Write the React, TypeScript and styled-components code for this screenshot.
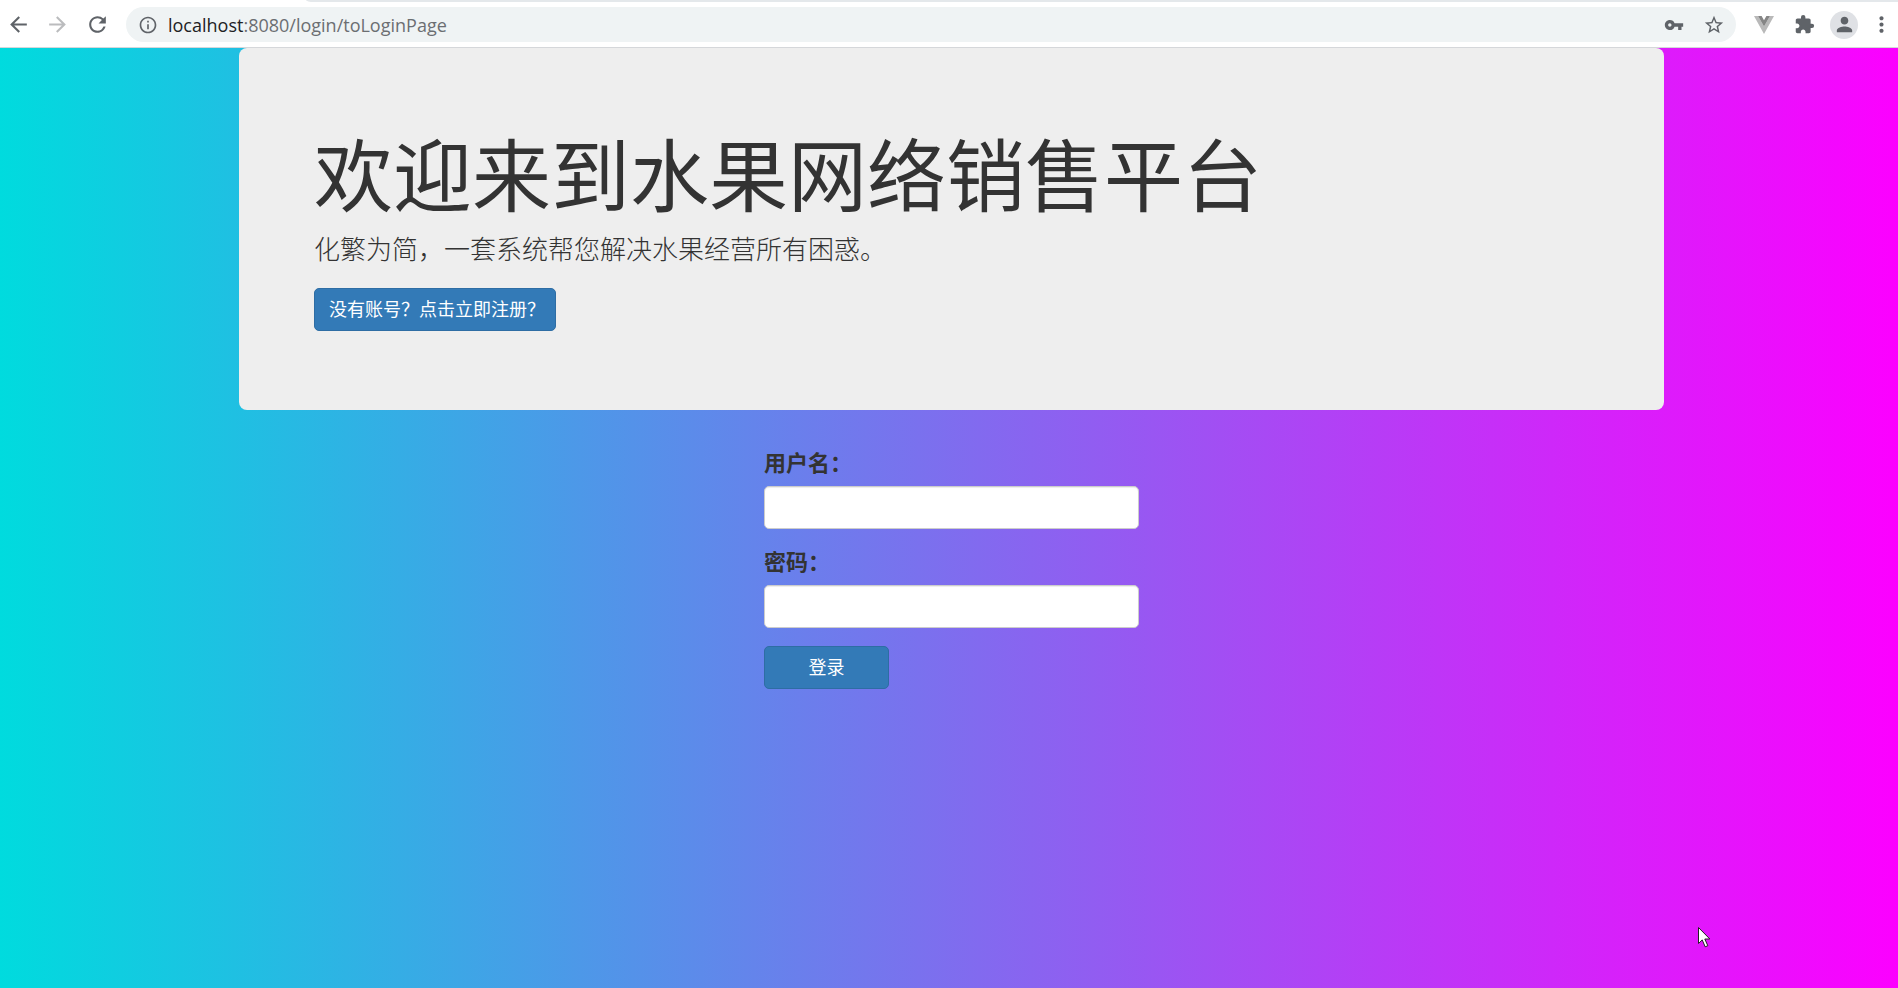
import React from "react";
import styled, { createGlobalStyle } from "styled-components";
import {
  MdArrowBack,
  MdArrowForward,
  MdRefresh,
  MdInfoOutline,
  MdVpnKey,
  MdStarBorder,
  MdExtension,
  MdPerson,
  MdMoreVert,
} from "react-icons/md";

const GlobalStyle = createGlobalStyle`
  *, *::before, *::after { box-sizing: border-box; }
  html, body, #root { height: 100%; }
  body {
    margin: 0;
    color: #333;
    font-family: "Noto Sans CJK SC", sans-serif;
  }
`;

const Screen = styled.div`
  min-height: 100%;
  display: flex;
  flex-direction: column;
`;

const BrowserBar = styled.header`
  display: flex;
  flex-direction: column;
  flex: none;
  height: 48px;
  background: #fff;
  border-bottom: 1px solid #d5d7da;
`;

const TabStrip = styled.div`
  flex: none;
  height: 2px;
  margin-left: 306px;
  background: #e4e8eb;
  border-bottom-left-radius: 8px 2px;
`;

const Toolbar = styled.div`
  flex: 1;
  display: flex;
  align-items: center;
`;

const IconButton = styled.button<{ $width?: number; $faded?: boolean }>`
  flex: none;
  display: flex;
  align-items: center;
  justify-content: center;
  width: ${(p) => p.$width ?? 40}px;
  height: 36px;
  padding: 0;
  border: 0;
  background: transparent;
  color: ${(p) => (p.$faded ? "#bbbcbe" : "#5f6368")};
`;

const NavButtons = styled.nav`
  display: flex;
  width: 126px;
`;

const AddressBar = styled.div`
  flex: 1;
  display: flex;
  align-items: center;
  height: 35px;
  padding: 0 2px 0 12px;
  border-radius: 18px;
  background: #eff3f4;
`;

const Address = styled.div`
  flex: 1;
  padding-left: 10px;
  color: #6b6e72;
  font: 18px/24px "Open Sans", sans-serif;
`;

const Host = styled.span`
  color: #202124;
`;

const Actions = styled.div`
  display: flex;
  padding-left: 8px;
`;

const Avatar = styled.span`
  display: flex;
  align-items: center;
  justify-content: center;
  width: 28px;
  height: 28px;
  border-radius: 50%;
  background: #dfe1e5;
`;

const Page = styled.main`
  position: relative;
  flex: 1;
  padding: 0 234px 0 239px;
  background: linear-gradient(90deg, #00dbde, #fc00ff);
`;

const Jumbotron = styled.section`
  padding: 80px 75px 79px;
  border-radius: 8px;
  background: #eee;
`;

const Title = styled.h1`
  margin: 0 0 14px;
  font-size: 79px;
  font-weight: 400;
  line-height: 88px;
`;

const Lead = styled.p`
  margin: 0 0 22px;
  font-size: 26px;
  font-weight: 300;
  line-height: 36px;
`;

const buttonLook = `
  height: 43px;
  border: 1px solid #2e6da4;
  border-radius: 5px;
  background: #337ab7;
  color: #fff;
  font: 18px/24px "Noto Sans CJK SC", sans-serif;
`;

const RegisterLink = styled.a`
  ${buttonLook}
  display: flex;
  align-items: center;
  width: 242px;
  padding: 0 0 4px 14px;
  text-decoration: none;
  white-space: nowrap;
`;

const LoginForm = styled.form`
  width: 375px;
  margin: 38px auto 0;
`;

const Field = styled.div`
  display: flex;
  flex-direction: column;
  gap: 12px;
  margin-bottom: 18px;
`;

const Label = styled.label`
  font-size: 22px;
  font-weight: 700;
  line-height: 26px;
`;

const TextInput = styled.input`
  width: 100%;
  height: 43px;
  padding: 8px 15px;
  border: 1px solid #ccc;
  border-radius: 5px;
  background: #fff;
  box-shadow: inset 0 1px 1px rgba(0, 0, 0, 0.075);
  font-size: 18px;
`;

const SubmitButton = styled.button`
  ${buttonLook}
  width: 125px;
  padding: 0 0 4px;
`;

const Pointer = styled.svg`
  position: absolute;
  right: 187px;
  bottom: 40px;
`;

export default function App() {
  return (
    <Screen>
      <GlobalStyle />
      <BrowserBar>
        <TabStrip />
        <Toolbar>
          <NavButtons>
            <IconButton aria-label="Back" $width={37}>
              <MdArrowBack size={25} />
            </IconButton>
            <IconButton aria-label="Forward" $faded>
              <MdArrowForward size={25} />
            </IconButton>
            <IconButton aria-label="Reload">
              <MdRefresh size={25} />
            </IconButton>
          </NavButtons>
          <AddressBar>
            <IconButton aria-label="Site information" $width={20}>
              <MdInfoOutline size={20} />
            </IconButton>
            <Address>
              <Host>localhost</Host>:8080/login/toLoginPage
            </Address>
            <IconButton aria-label="Passwords">
              <MdVpnKey size={20} />
            </IconButton>
            <IconButton aria-label="Bookmark">
              <MdStarBorder size={22} />
            </IconButton>
          </AddressBar>
          <Actions>
            <IconButton aria-label="Vue devtools">
              <svg width="20" height="18" viewBox="0 0 20 18">
                <path d="M0 0h4l6 10.400L16 0h4L10 18z" fill="#b9b9b9" />
                <path d="M4 0h3.600L10 4.200 12.400 0H16l-6 10.400z" fill="#858585" />
              </svg>
            </IconButton>
            <IconButton aria-label="Extensions">
              <MdExtension size={21} />
            </IconButton>
            <IconButton aria-label="Profile">
              <Avatar>
                <MdPerson size={23} />
              </Avatar>
            </IconButton>
            <IconButton aria-label="Menu" $width={34}>
              <MdMoreVert size={25} />
            </IconButton>
          </Actions>
        </Toolbar>
      </BrowserBar>
      <Page>
        <Jumbotron>
          <Title>欢迎来到水果网络销售平台</Title>
          <Lead>化繁为简，一套系统帮您解决水果经营所有困惑。</Lead>
          <RegisterLink href="#register">没有账号？点击立即注册？</RegisterLink>
        </Jumbotron>
        <LoginForm onSubmit={(e) => e.preventDefault()}>
          <Field>
            <Label htmlFor="username">用户名：</Label>
            <TextInput id="username" type="text" />
          </Field>
          <Field>
            <Label htmlFor="password">密码：</Label>
            <TextInput id="password" type="password" />
          </Field>
          <SubmitButton type="submit">登录</SubmitButton>
        </LoginForm>
        <Pointer width="13" height="21" viewBox="0 0 13 21" aria-hidden="true">
          <path
            d="M.5.500v16l3.700-3.600 3 6.900 2.600-1.100-3-6.700h5z"
            fill="#fff"
            stroke="#222"
          />
        </Pointer>
      </Page>
    </Screen>
  );
}
